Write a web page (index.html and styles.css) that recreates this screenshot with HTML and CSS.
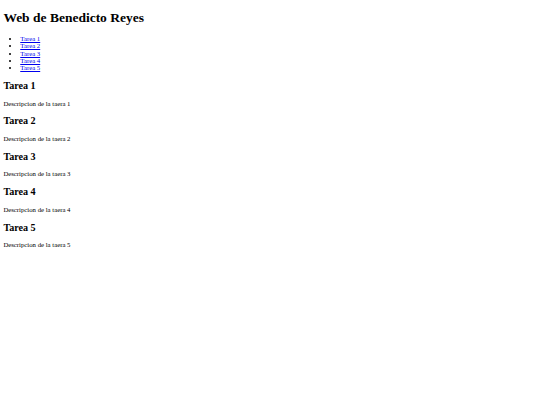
FILE: index.html
```html
<!DOCTYPE html>
<html lang="es">
<head>
<meta charset="utf-8">
<title>Web de Benedicto Reyes</title>
<link rel="stylesheet" href="styles.css">
</head>
<body>
<h1 class="title">Web de Benedicto Reyes</h1>
<ul class="menu">
<li><a href="#t1">Tarea 1</a></li>
<li><a href="#t2">Tarea 2</a></li>
<li><a href="#t3">Tarea 3</a></li>
<li><a href="#t4">Tarea 4</a></li>
<li><a href="#t5">Tarea 5</a></li>
</ul>
<h2 class="task" id="t1">Tarea 1</h2>
<p class="desc">Descripcion de la taera 1</p>
<h2 class="task" id="t2">Tarea 2</h2>
<p class="desc">Descripcion de la taera 2</p>
<h2 class="task" id="t3">Tarea 3</h2>
<p class="desc">Descripcion de la taera 3</p>
<h2 class="task" id="t4">Tarea 4</h2>
<p class="desc">Descripcion de la taera 4</p>
<h2 class="task" id="t5">Tarea 5</h2>
<p class="desc">Descripcion de la taera 5</p>
</body>
</html>
```
FILE: styles.css
```css
html {
  background: #fff;
}
body {
  margin: 3.375px;
  font-family: "Liberation Serif", "Times New Roman", serif;
  font-size: 6.75px;
  line-height: 1.107;
  color: #000;
}
.title {
  font-size: 2em;
  margin: 7.5px 0 9.05px;
}
.menu {
  margin: 1em 0;
  padding-left: 16.875px;
  line-height: 1.09;
}
.menu a {
  color: #0000ee;
}
.task {
  font-size: 1.5em;
  margin: 0.83em 0;
}
.desc {
  margin: 1em 0;
}
```
